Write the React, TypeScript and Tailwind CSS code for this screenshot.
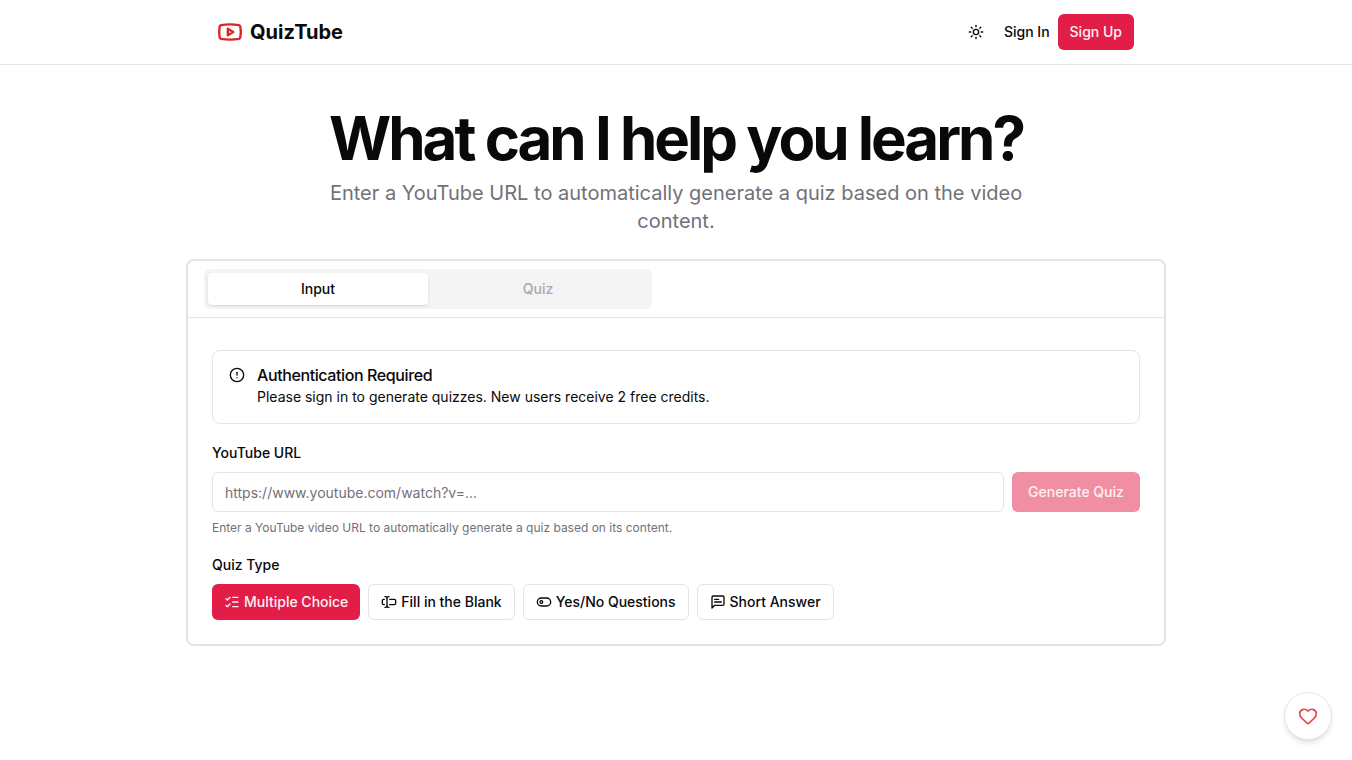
import { Youtube, Sun, CircleAlert, ListChecks, TextCursorInput, Heart } from "lucide-react";
import type { SVGProps } from "react";

function Toggle(props: SVGProps<SVGSVGElement>) {
  return (
    <svg viewBox="0 0 24 24" fill="none" stroke="currentColor" strokeWidth={2} strokeLinecap="round" strokeLinejoin="round" {...props}>
      <rect width="20" height="12" x="2" y="6" rx="6" ry="6" />
      <circle cx="8" cy="12" r="2" />
    </svg>
  );
}

function MessageText(props: SVGProps<SVGSVGElement>) {
  return (
    <svg viewBox="0 0 24 24" fill="none" stroke="currentColor" strokeWidth={2} strokeLinecap="round" strokeLinejoin="round" {...props}>
      <path d="M21 15a2 2 0 0 1-2 2H7l-4 4V5a2 2 0 0 1 2-2h14a2 2 0 0 1 2 2z" />
      <path d="M13 8H7" />
      <path d="M17 12H7" />
    </svg>
  );
}

const types = [
  { label: "Multiple Choice", Icon: ListChecks, active: true },
  { label: "Fill in the Blank", Icon: TextCursorInput, active: false },
  { label: "Yes/No Questions", Icon: Toggle, active: false },
  { label: "Short Answer", Icon: MessageText, active: false },
];

export default function App() {
  return (
    <div className="min-h-[760px] bg-white text-[#09090b] antialiased font-['Inter',sans-serif]">
      <header className="h-[65px] border-b border-[#e4e4e7]">
        <div className="mx-auto flex h-16 w-[980px] items-center justify-between px-8">
          <div className="-ml-px flex items-center gap-[7px]">
            <Youtube className="h-[26px] w-[26px] text-[#dc2626]" strokeWidth={2.2} />
            <span className="text-xl font-bold">QuizTube</span>
          </div>
          <div className="flex items-center">
            <div className="mr-0.5 flex h-9 w-9 items-center justify-center">
              <Sun className="h-4 w-4" />
            </div>
            <span className="flex h-9 items-center px-2 text-sm font-medium">Sign In</span>
            <button className="h-9 rounded-md bg-[#e11d48] px-3 text-sm font-medium text-[#fff1f2]">Sign Up</button>
          </div>
        </div>
      </header>
      <main className="mx-auto w-[980px]">
        <div className="flex flex-col items-center pt-[43px] text-center">
          <h1 className="text-[60px] leading-[60px] font-bold tracking-[-0.05em] text-[#09090b]">What can I help you learn?</h1>
          <p className="mt-[11px] w-[720px] text-xl leading-7 text-[#71717a]">Enter a YouTube URL to automatically generate a quiz based on the video content.</p>
        </div>
        <section className="mt-[24px] rounded-lg border-2 border-[#e4e4e7]">
          <div className="h-[57px] border-b border-[#e4e4e7] px-4 pt-2">
            <div className="grid h-10 w-[448px] grid-cols-2 rounded-md bg-[#f4f4f5] p-1">
              <div className="flex items-center justify-center rounded-sm bg-white text-sm font-medium shadow-sm">Input</div>
              <div className="flex items-center justify-center text-sm font-medium text-[#a8a8ae]">Quiz</div>
            </div>
          </div>
          <div className="px-6 pt-8 pb-6">
            <div className="flex h-[74px] gap-3 rounded-lg border border-[#e4e4e7] px-4 pt-[14px]">
              <CircleAlert className="mt-[2px] h-4 w-4 shrink-0" />
              <div>
                <div className="text-base leading-[20px] font-medium tracking-tight">Authentication Required</div>
                <div className="mt-[2px] text-sm leading-5">Please sign in to generate quizzes. New users receive 2 free credits.</div>
              </div>
            </div>
            <div className="mt-[19px] text-sm leading-5 font-medium">YouTube URL</div>
            <div className="mt-[9px] flex gap-2">
              <div className="flex h-10 flex-1 items-center rounded-md border border-[#e4e4e7] px-3 pt-0.5 text-sm text-[#71717a]">https://www.youtube.com/watch?v=...</div>
              <button className="h-10 w-[128px] rounded-md bg-[#e11d48]/50 text-sm font-medium text-[#fff1f2]">Generate Quiz</button>
            </div>
            <p className="mt-2 text-xs leading-4 text-[#71717a]">Enter a YouTube video URL to automatically generate a quiz based on its content.</p>
            <div className="mt-[19px] text-sm leading-5 font-medium">Quiz Type</div>
            <div className="mt-[9px] flex gap-2">
              {types.map(({ label, Icon, active }) => (
                <button
                  key={label}
                  className={
                    active
                      ? "flex h-9 items-center gap-1 rounded-md bg-[#e11d48] px-3 text-sm font-medium text-[#fff1f2]"
                      : "flex h-9 items-center gap-1 rounded-md border border-[#e4e4e7] bg-white px-3 text-sm font-medium"
                  }
                >
                  <Icon className="h-4 w-4" />
                  {label}
                </button>
              ))}
            </div>
          </div>
        </section>
      </main>
      <button className="fixed right-[20px] bottom-[20px] flex h-[48px] w-[48px] items-center justify-center rounded-full border border-[#e4e4e7] bg-white shadow-md">
        <Heart className="h-5 w-5 text-[#ef4444]" />
      </button>
    </div>
  );
}
